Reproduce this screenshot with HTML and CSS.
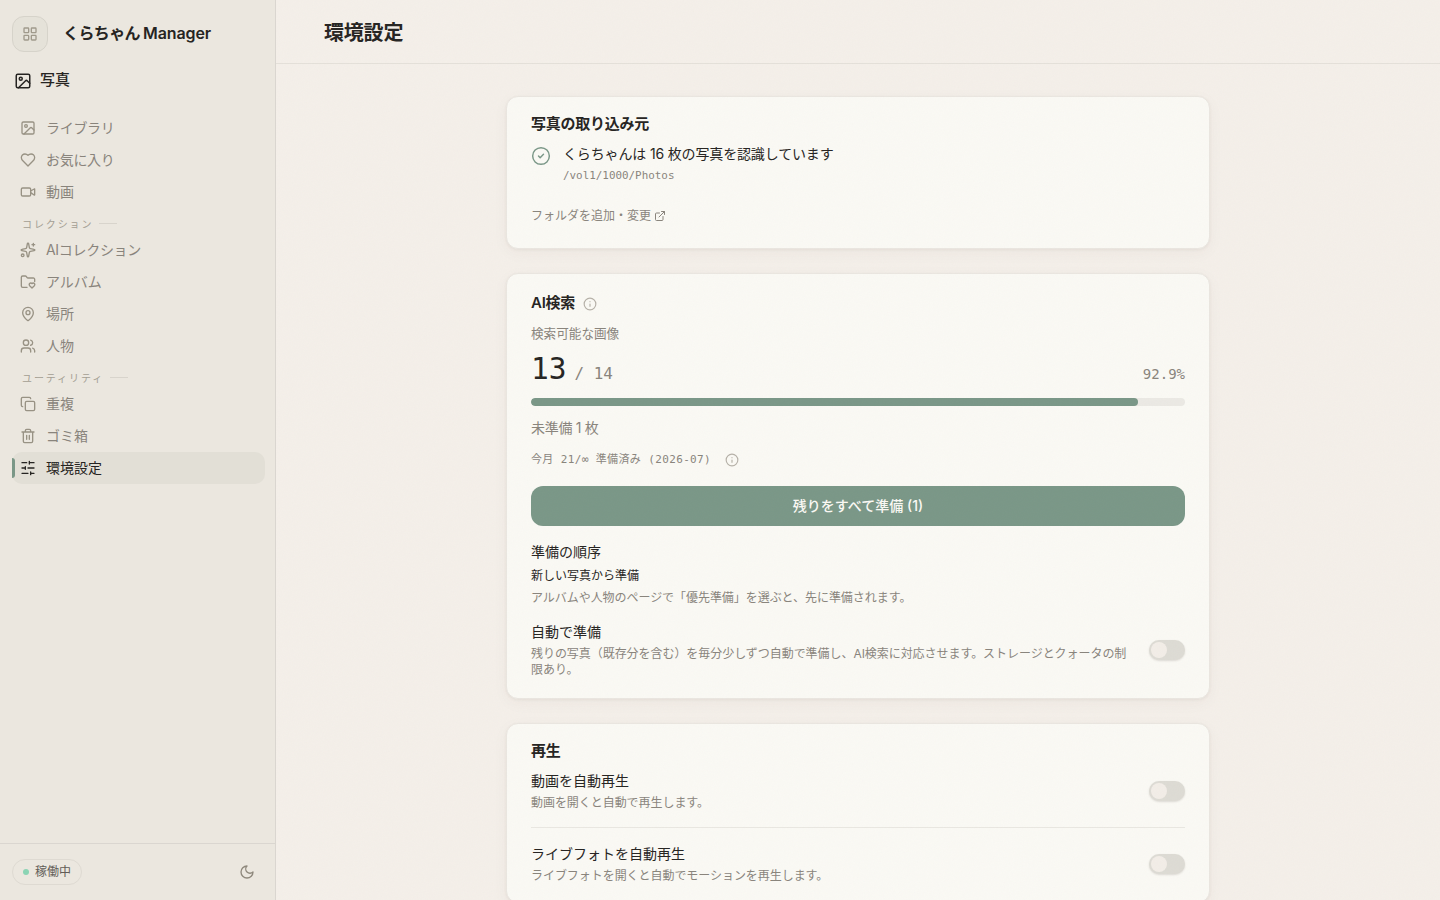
FILE: index.html
```html
<!DOCTYPE html>
<html lang="ja">
<head>
<meta charset="utf-8">
<title>環境設定</title>
<link rel="stylesheet" href="styles.css">
</head>
<body>
<div class="app">
  <aside class="sidebar">
    <div class="brand">
      <button class="apps-button" aria-label="アプリ"><svg class="icon" viewBox="0 0 24 24"><rect x="3" y="3" width="7" height="7" rx="1"/><rect x="14" y="3" width="7" height="7" rx="1"/><rect x="14" y="14" width="7" height="7" rx="1"/><rect x="3" y="14" width="7" height="7" rx="1"/></svg></button>
      <span class="brand-name"><span class="brand-kana">くらちゃん</span> <span class="brand-latin">Manager</span></span>
    </div>
    <div class="module"><svg class="icon icon-18" viewBox="0 0 24 24"><rect x="3" y="3" width="18" height="18" rx="2"/><circle cx="9" cy="9" r="2"/><path d="M21 15l-3.1-3.1a2 2 0 0 0-2.8 0L6 21"/></svg><span>写真</span></div>
    <nav class="nav">
      <a class="nav-item"><svg class="icon" viewBox="0 0 24 24"><rect x="3" y="3" width="18" height="18" rx="2"/><circle cx="9" cy="9" r="2"/><path d="M21 15l-3.1-3.1a2 2 0 0 0-2.8 0L6 21"/></svg><span class="kana">ライブラリ</span></a>
      <a class="nav-item"><svg class="icon" viewBox="0 0 24 24"><path d="M19 14c1.5-1.5 3-3.2 3-5.500A5.500 5.500 0 0 0 16.500 3c-1.800 0-3 .5-4.500 2-1.500-1.500-2.700-2-4.500-2A5.500 5.500 0 0 0 2 8.500c0 2.300 1.500 4 3 5.500l7 7Z"/></svg><span class="kana">お気に入り</span></a>
      <a class="nav-item"><svg class="icon" viewBox="0 0 24 24"><path d="M16 13l5.200 3.500a.5.5 0 0 0 .8-.4V7.900a.5.5 0 0 0-.8-.4L16 10.500"/><rect x="2" y="6" width="14" height="12" rx="2"/></svg><span>動画</span></a>
      <div class="nav-section"><span>コレクション</span></div>
      <a class="nav-item"><svg class="icon" viewBox="0 0 24 24"><path d="M11 2.800a1 1 0 0 1 2 0l1.050 5.560a2 2 0 0 0 1.600 1.600l5.550 1.050a1 1 0 0 1 0 2l-5.550 1.040a2 2 0 0 0-1.600 1.600L13 21.200a1 1 0 0 1-2 0l-1.050-5.550a2 2 0 0 0-1.600-1.600L2.800 13a1 1 0 0 1 0-2l5.550-1.050a2 2 0 0 0 1.600-1.600z"/><path d="M20 2v4M22 4h-4"/><circle cx="4" cy="20" r="2"/></svg><span class="kana">AIコレクション</span></a>
      <a class="nav-item"><svg class="icon" viewBox="0 0 24 24"><path d="M10.600 20H4a2 2 0 0 1-2-2V5a2 2 0 0 1 2-2h3.900a2 2 0 0 1 1.690.9l.81 1.200a2 2 0 0 0 1.670.9H20a2 2 0 0 1 2 2v3.400"/><path d="M21.500 14.300a2.200 2.200 0 0 0-3.300 0l-.2.200-.2-.2a2.200 2.200 0 0 0-3.300 0 2.400 2.400 0 0 0 0 3.200L18 21l3.500-3.500a2.400 2.400 0 0 0 0-3.200z"/></svg><span>アルバム</span></a>
      <a class="nav-item"><svg class="icon" viewBox="0 0 24 24"><path d="M20 10c0 5-5.540 10.200-7.400 11.800a1 1 0 0 1-1.200 0C9.540 20.200 4 15 4 10a8 8 0 0 1 16 0"/><circle cx="12" cy="10" r="3"/></svg><span>場所</span></a>
      <a class="nav-item"><svg class="icon" viewBox="0 0 24 24"><path d="M16 21v-2a4 4 0 0 0-4-4H6a4 4 0 0 0-4 4v2M16 3.130a4 4 0 0 1 0 7.750M22 21v-2a4 4 0 0 0-3-3.870"/><circle cx="9" cy="7" r="4"/></svg><span>人物</span></a>
      <div class="nav-section"><span>ユーティリティ</span></div>
      <a class="nav-item"><svg class="icon" viewBox="0 0 24 24"><rect x="8" y="8" width="14" height="14" rx="2"/><path d="M4 16c-1.100 0-2-.9-2-2V4c0-1.100.9-2 2-2h10c1.100 0 2 .9 2 2"/></svg><span>重複</span></a>
      <a class="nav-item"><svg class="icon" viewBox="0 0 24 24"><path d="M3 6h18M19 6v14a2 2 0 0 1-2 2H7a2 2 0 0 1-2-2V6M8 6V4a2 2 0 0 1 2-2h4a2 2 0 0 1 2 2v2M10 11v6M14 11v6"/></svg><span>ゴミ箱</span></a>
      <a class="nav-item active"><svg class="icon" viewBox="0 0 24 24"><path d="M21 4h-7M10 4H3M21 12h-9M8 12H3M21 20h-5M12 20H3M14 2v4M8 10v4M16 18v4"/></svg><span>環境設定</span></a>
    </nav>
    <div class="sidebar-footer">
      <span class="status"><i class="status-dot"></i>稼働中</span>
      <svg class="icon moon" viewBox="0 0 24 24"><path d="M12 3a6 6 0 0 0 9 9 9 9 0 1 1-9-9Z"/></svg>
    </div>
  </aside>
  <main class="main">
    <header class="topbar"><h1>環境設定</h1></header>
    <div class="content">
      <section class="card source-card">
        <h2>写真の取り込み元</h2>
        <div class="source">
          <svg class="icon check" viewBox="0 0 24 24"><circle cx="12" cy="12" r="10"/><path d="M9 12l2 2 4-4"/></svg>
          <div><p class="source-text">くらちゃんは 16 枚の写真を認識しています</p><p class="path">/vol1/1000/Photos</p></div>
        </div>
        <a class="folder-link">フォルダを追加・変更<svg class="icon" viewBox="0 0 24 24"><path d="M15 3h6v6M10 14L21 3M18 13v6a2 2 0 0 1-2 2H5a2 2 0 0 1-2-2V8a2 2 0 0 1 2-2h6"/></svg></a>
      </section>
      <section class="card search-card">
        <div class="heading"><h2>AI検索</h2><svg class="icon info" viewBox="0 0 24 24"><circle cx="12" cy="12" r="10"/><path d="M12 16v-4M12 8h.01"/></svg></div>
        <p class="label">検索可能な画像</p>
        <div class="count"><div><span class="count-now">13</span><span class="count-total">/ 14</span></div><span class="percent">92.9%</span></div>
        <div class="progress"><div class="progress-fill" style="width:92.86%"></div></div>
        <p class="pending">未準備 1 枚</p>
        <div class="quota"><span>今月 21/∞ 準備済み (2026-07)</span><svg class="icon info" viewBox="0 0 24 24"><circle cx="12" cy="12" r="10"/><path d="M12 16v-4M12 8h.01"/></svg></div>
        <button class="primary">残りをすべて準備 (1)</button>
        <div class="order"><h3>準備の順序</h3><p class="order-value">新しい写真から準備</p><p class="desc">アルバムや人物のページで「優先準備」を選ぶと、先に準備されます。</p></div>
        <div class="setting auto"><div class="setting-body"><h3>自動で準備</h3><p class="desc">残りの写真（既存分を含む）を毎分少しずつ自動で準備し、AI検索に対応させます。ストレージとクォータの制限あり。</p></div><span class="toggle"></span></div>
      </section>
      <section class="card playback-card">
        <h2>再生</h2>
        <div class="setting"><div class="setting-body"><h3>動画を自動再生</h3><p class="desc">動画を開くと自動で再生します。</p></div><span class="toggle"></span></div>
        <div class="setting divided"><div class="setting-body"><h3>ライブフォトを自動再生</h3><p class="desc">ライブフォトを開くと自動でモーションを再生します。</p></div><span class="toggle"></span></div>
      </section>
    </div>
    <svg class="grain" aria-hidden="true"><filter id="paper"><feTurbulence type="fractalNoise" baseFrequency=".8" numOctaves="4" stitchTiles="stitch"/></filter><rect width="100%" height="100%" filter="url(#paper)"/></svg>
  </main>
</div>
</body>
</html>
```
FILE: styles.css
```css
* { box-sizing: border-box; }
body { margin: 0; background: #f4efe9; color: #262422; font: 14px/20px Inter, "Noto Sans CJK JP", sans-serif; overflow: hidden; }
h1, h2, h3, p { margin: 0; font-weight: 400; }
button { font: inherit; border: 0; padding: 0; }
.icon { width: 16px; height: 16px; flex: none; fill: none; stroke: currentColor; stroke-width: 2; stroke-linecap: round; stroke-linejoin: round; }
.app { display: flex; height: 900px; overflow: hidden; }
.sidebar { width: 276px; flex: none; display: flex; flex-direction: column; background: #ebe7df; border-right: 1px solid #dad6d0; }
.brand { display: flex; align-items: center; gap: 15px; padding: 16px 12px 0; height: 52px; }
.apps-button { width: 36px; height: 36px; display: grid; place-items: center; border: 1px solid #d6d3ca; border-radius: 12px; background: #e5e2d9; color: #a09a8c; }
.brand-name { display: flex; gap: 4px; font-size: 16px; font-weight: 600; white-space: nowrap; padding-bottom: 2px; }
.brand-kana { letter-spacing: -.6px; }
.brand-latin { letter-spacing: -.1px; margin-left: -1px; }
.module { display: flex; align-items: center; gap: 8px; padding: 0 14px; height: 24px; margin-top: 16px; font-size: 15px; font-weight: 500; }
.icon-18 { width: 18px; height: 18px; position: relative; top: 1px; }
.nav { padding: 20px 10px 0 12px; flex: 1; color: #89847c; }
.nav-item { display: flex; align-items: center; gap: 10px; height: 32px; padding: 0 8px; border-radius: 10px; position: relative; }
.nav-item .icon { color: #989284; }
.kana { letter-spacing: -.3px; }
.nav-item.active { background: #e2dfd6; color: #262422; }
.nav-item.active .icon { color: #262422; }
.nav-item.active::before { content: ""; position: absolute; left: 0; top: 6px; width: 3px; height: 20px; border-radius: 0 3px 3px 0; background: #7a9787; }
.nav-section { height: 26px; display: flex; align-items: center; gap: 6px; padding: 5px 10px 0; font-size: 10px; letter-spacing: 1.9px; color: #a39e93; }
.nav-section::after { content: ""; width: 18px; height: 1px; background: #d8d4cc; }
.sidebar-footer { height: 57px; border-top: 1px solid #dad6d0; display: flex; align-items: center; justify-content: space-between; padding: 0 20px 0 12px; }
.status { height: 26px; width: 70px; display: flex; align-items: center; gap: 6px; padding-left: 10px; border: 1px solid #dedad2; border-radius: 13px; font-size: 12px; color: #625d57; white-space: nowrap; }
.status-dot { width: 6px; height: 6px; border-radius: 50%; background: #8bd4b4; }
.moon { color: #8e887c; }
.main { flex: 1; min-width: 0; height: 900px; overflow: hidden; position: relative; }
.grain { position: absolute; inset: 0; width: 100%; height: 100%; opacity: .025; pointer-events: none; }
.topbar { height: 64px; padding: 2px 48px 0; display: flex; align-items: center; border-bottom: 1px solid #e4e0d9; }
h1 { font-size: 20px; line-height: 28px; font-weight: 700; letter-spacing: -.2px; }
.content { width: 704px; height: 804px; margin: 32px auto 0; display: flex; flex-direction: column; gap: 24px; }
.card { flex: none; background: #faf9f4; border: 1px solid #eae6e0; border-radius: 12px; padding: 16px 24px 0; box-shadow: 0 1px 3px rgba(70,55,40,.06), 0 4px 16px rgba(70,55,40,.04); }
h2 { font-size: 15px; line-height: 22px; font-weight: 600; letter-spacing: -.25px; }
h3 { font-size: 14px; line-height: 20px; }
.source-card { height: 153px; }
.source { display: flex; gap: 12px; margin-top: 9px; }
.source-text { letter-spacing: -.15px; }
.check { width: 20px; height: 20px; color: #7a9787; margin-top: 2px; stroke-width: 1.75; }
.path, .count, .quota { font-family: "DejaVu Sans Mono", "Noto Sans CJK JP", monospace; }
.path { font-size: 10.9px; line-height: 18px; margin-top: 3px; color: #89847c; }
.folder-link { display: flex; align-items: center; gap: 3px; margin-top: 21px; font-size: 12px; line-height: 20px; color: #89847c; }
.folder-link .icon { width: 12px; height: 12px; }
.search-card { height: 426px; padding-top: 18px; }
.heading { display: flex; align-items: center; gap: 8px; }
.info { width: 14px; height: 14px; color: #b6b1a8; }
.heading .info { position: relative; top: 1px; }
.label { font-size: 12.6px; line-height: 18px; margin-top: 11px; color: #89847c; }
.count { display: flex; justify-content: space-between; align-items: baseline; height: 36px; margin-top: 8px; color: #89847c; }
.count-now { font-size: 29.5px; line-height: 36px; color: #262422; }
.count-total { font-size: 15.9px; margin-left: 8px; }
.percent { font-size: 14px; }
.progress { height: 8px; margin-top: 11px; border-radius: 4px; background: #ebe9e4; overflow: hidden; }
.progress-fill { height: 8px; border-radius: 4px; background: #7a9787; }
.pending { color: #89847c; margin-top: 12px; letter-spacing: -.3px; }
.quota { display: flex; align-items: center; gap: 14px; font-size: 11px; letter-spacing: .37px; color: #89847c; height: 20px; margin-top: 12px; }
.primary { display: block; width: 100%; height: 40px; margin-top: 16px; border-radius: 12px; background: #7a9787; color: #faf9f4; font-weight: 500; }
.order { margin-top: 16px; }
.order-value { font-size: 12px; line-height: 20px; margin-top: 4px; }
.desc { font-size: 12px; line-height: 16px; letter-spacing: -.05px; color: #89847c; }
.order .desc { margin-top: 4px; }
.setting { display: flex; justify-content: space-between; align-items: center; gap: 20px; }
.auto { margin-top: 16px; }
.setting-body { flex: 1; min-width: 0; }
.setting .desc { margin-top: 4px; }
.toggle { flex: none; width: 36px; height: 20px; padding: 2px; border-radius: 10px; background: #dddbd4; box-shadow: 0 1px 2px rgba(60,50,40,.15); }
.toggle::before { content: ""; display: block; width: 16px; height: 16px; border-radius: 50%; background: #f2ede7; }
.playback-card { height: 180px; }
.playback-card h2 { margin-bottom: 9px; }
.divided { border-top: 1px solid #e9e7e1; margin-top: 16px; padding-top: 16px; }
```
